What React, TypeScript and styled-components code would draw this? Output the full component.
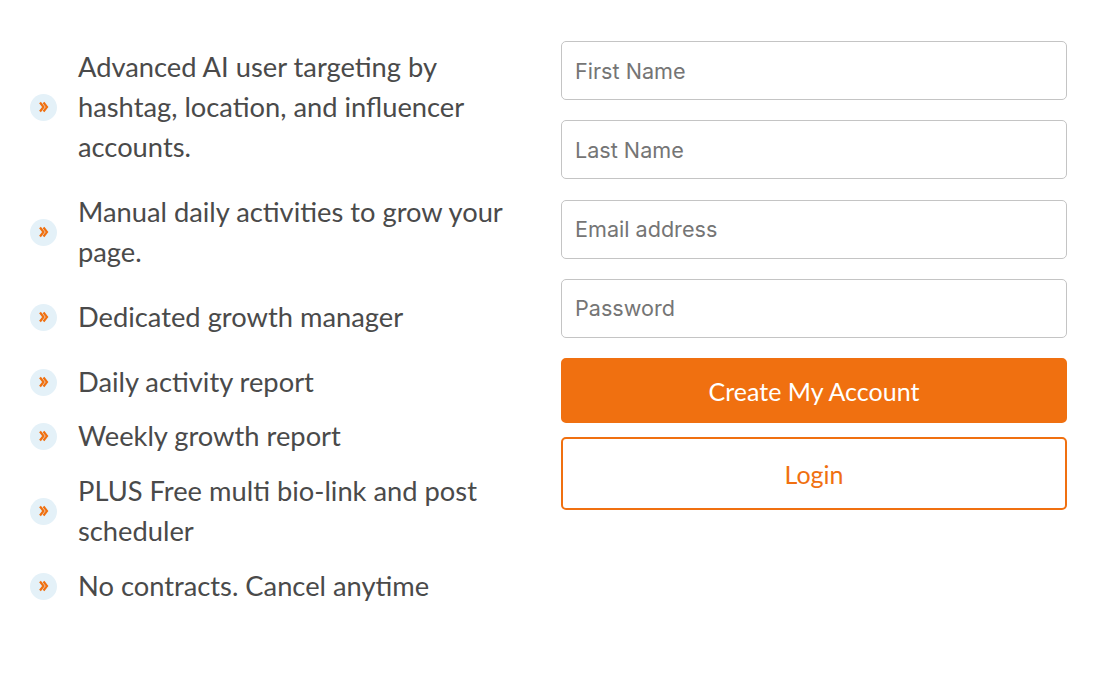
import styled, { createGlobalStyle } from "styled-components";

const GlobalStyle = createGlobalStyle`
  body {
    margin: 0;
    background: #fff;
    font-family: "Lato", "Liberation Sans", sans-serif;
  }
`;

const Page = styled.div`
  display: grid;
  grid-template-columns: 490px 506px;
  column-gap: 41px;
  padding: 41px 0 0 30px;
`;

const Features = styled.ul`
  list-style: none;
  margin: 6px 0 0;
  padding: 0;
`;

const Feature = styled.li<{ $gap: number }>`
  display: flex;
  align-items: center;
  gap: 21px;
  margin-bottom: ${p => p.$gap}px;
  font-size: 27.3px;
  line-height: 40px;
  color: #4a4a4a;
`;

const Bullet = styled.span`
  flex: none;
  width: 27px;
  height: 27px;
  border-radius: 50%;
  background: #e4f1f8;
  display: flex;
  align-items: center;
  justify-content: center;
`;

const Form = styled.form`
  display: flex;
  flex-direction: column;
  gap: 20.3px;
`;

const Input = styled.input`
  box-sizing: border-box;
  width: 100%;
  height: 59px;
  padding: 0 13px;
  border: 1px solid #c4c4c4;
  border-radius: 5px;
  font-family: "Inter", "Roboto", sans-serif;
  font-size: 21.6px;
  color: #333;
  outline: none;
  &::placeholder {
    color: #757575;
  }
`;

const Button = styled.button<{ $outline?: boolean }>`
  box-sizing: border-box;
  width: 100%;
  height: ${p => (p.$outline ? 73 : 65)}px;
  margin-top: ${p => (p.$outline ? -6 : 0)}px;
  border-radius: 5px;
  border: 2px solid #f07010;
  background: ${p => (p.$outline ? "#fff" : "#f07010")};
  color: ${p => (p.$outline ? "#f07010" : "#fff")};
  font-family: "Lato", "Liberation Sans", sans-serif;
  font-size: 25px;
  cursor: pointer;
`;

function Chevrons() {
  return (
    <svg width="10" height="12" viewBox="0 0 10 12">
      <path d="M1 1.5 L4.5 6 L1 10.5" fill="none" stroke="#f07010" strokeWidth="2.2" />
      <path d="M4.5 1.5 L8 6 L4.5 10.5" fill="none" stroke="#f07010" strokeWidth="2.2" />
    </svg>
  );
}

const items: { text: string; gap: number }[] = [
  { text: "Advanced AI user targeting by hashtag, location, and influencer accounts.", gap: 25 },
  { text: "Manual daily activities to grow your page.", gap: 25 },
  { text: "Dedicated growth manager", gap: 25 },
  { text: "Daily activity report", gap: 14 },
  { text: "Weekly growth report", gap: 15 },
  { text: "PLUS Free multi bio-link and post scheduler", gap: 15 },
  { text: "No contracts. Cancel anytime", gap: 0 },
];

export default function App() {
  return (
    <>
      <GlobalStyle />
      <Page>
        <Features>
          {items.map(item => (
            <Feature key={item.text} $gap={item.gap}>
              <Bullet>
                <Chevrons />
              </Bullet>
              <span>{item.text}</span>
            </Feature>
          ))}
        </Features>
        <Form onSubmit={e => e.preventDefault()}>
          <Input placeholder="First Name" />
          <Input placeholder="Last Name" />
          <Input placeholder="Email address" type="email" />
          <Input placeholder="Password" type="password" />
          <Button type="submit">Create My Account</Button>
          <Button type="button" $outline>
            Login
          </Button>
        </Form>
      </Page>
    </>
  );
}
